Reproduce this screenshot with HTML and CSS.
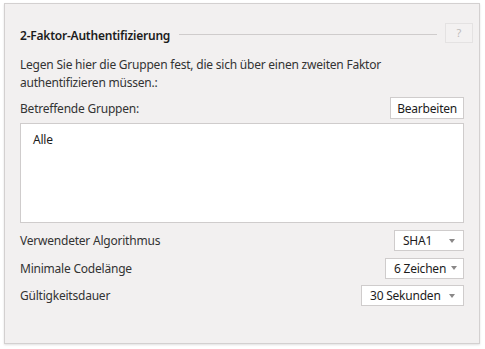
FILE: index.html
```html
<!DOCTYPE html>
<html lang="de">
<head>
    <meta charset="UTF-8">
    <title>2-Faktor-Authentifizierung</title>
    <link rel="stylesheet" href="styles.css">
</head>
<body>
    <div class="panel">
        <div class="panel-head">
            <h2 class="panel-title">2-Faktor-Authentifizierung</h2>
            <span class="head-line"></span>
            <button class="help-btn">?</button>
        </div>
        <p class="intro">Legen Sie hier die Gruppen fest, die sich über einen zweiten Faktor<br>authentifizieren müssen.:</p>
        <div class="row groups-row">
            <span class="label">Betreffende Gruppen:</span>
            <button class="btn">Bearbeiten</button>
        </div>
        <div class="group-box">
            <div class="group-item">Alle</div>
        </div>
        <div class="row">
            <span class="label">Verwendeter Algorithmus</span>
            <div class="select select-algo"><span>SHA1</span><i class="caret"></i></div>
        </div>
        <div class="row">
            <span class="label">Minimale Codelänge</span>
            <div class="select select-len"><span>6 Zeichen</span><i class="caret"></i></div>
        </div>
        <div class="row">
            <span class="label">Gültigkeitsdauer</span>
            <div class="select select-time"><span>30 Sekunden</span><i class="caret"></i></div>
        </div>
    </div>
</body>
</html>
```

FILE: styles.css
```css
* {
    margin: 0;
    padding: 0;
    box-sizing: border-box;
}

body {
    font-family: "Segoe UI", "Noto Sans", "Open Sans", sans-serif;
    font-size: 12px;
    letter-spacing: -0.22px;
    color: #333;
    background: #fff;
    padding: 3px 5px 5px 4px;
}

.panel {
    height: 341px;
    background: #f2f0f0;
    border: 1px solid #d3d0d0;
    box-shadow: 0 1px 2px rgba(0, 0, 0, 0.12);
    padding: 19px 15px 0 15px;
}

.panel-head {
    display: flex;
    align-items: center;
    height: 21px;
    margin-bottom: 12px;
}

.panel-title {
    font-size: 12px;
    font-weight: 600;
    color: #1c1c1c;
    margin-top: 4px;
    white-space: nowrap;
}

.head-line {
    flex: 1;
    height: 1px;
    background: #cfcccc;
    margin: 2px 8px 0 9px;
}

.help-btn {
    width: 28px;
    height: 20px;
    margin-right: -9px;
    margin-top: -2px;
    border: 1px solid #e4e2e2;
    background: #f3f1f1;
    color: #bdbbbb;
    font-family: inherit;
    font-size: 11px;
}

.intro {
    line-height: 18px;
    margin-bottom: 4px;
    white-space: nowrap;
}

.row {
    display: flex;
    align-items: center;
    justify-content: space-between;
    height: 27.5px;
    white-space: nowrap;
}

.groups-row {
    height: 24px;
    margin-bottom: 3px;
}

.btn {
    height: 22px;
    padding: 0 6px;
    border: 1px solid #cfcccc;
    background: #fff;
    color: #1c1c1c;
    font-family: inherit;
    font-size: 12px;
    letter-spacing: -0.22px;
}

.group-box {
    height: 100px;
    background: #fff;
    border: 1px solid #cfcccc;
    padding: 7px 12px;
    margin-bottom: 4px;
}

.group-item {
    color: #1c1c1c;
}

.select {
    display: flex;
    align-items: center;
    height: 21px;
    background: #fff;
    border: 1px solid #cfcccc;
    color: #1c1c1c;
    padding: 0 8px;
}

.select span {
    flex: 1;
}

.select-algo { width: 70px; }
.select-len { width: 79px; padding-right: 6px; }
.select-time { width: 103px; }

.caret {
    width: 0;
    height: 0;
    border-left: 3px solid transparent;
    border-right: 3px solid transparent;
    border-top: 4px solid #8a8888;
    margin-left: 4px;
}
```
